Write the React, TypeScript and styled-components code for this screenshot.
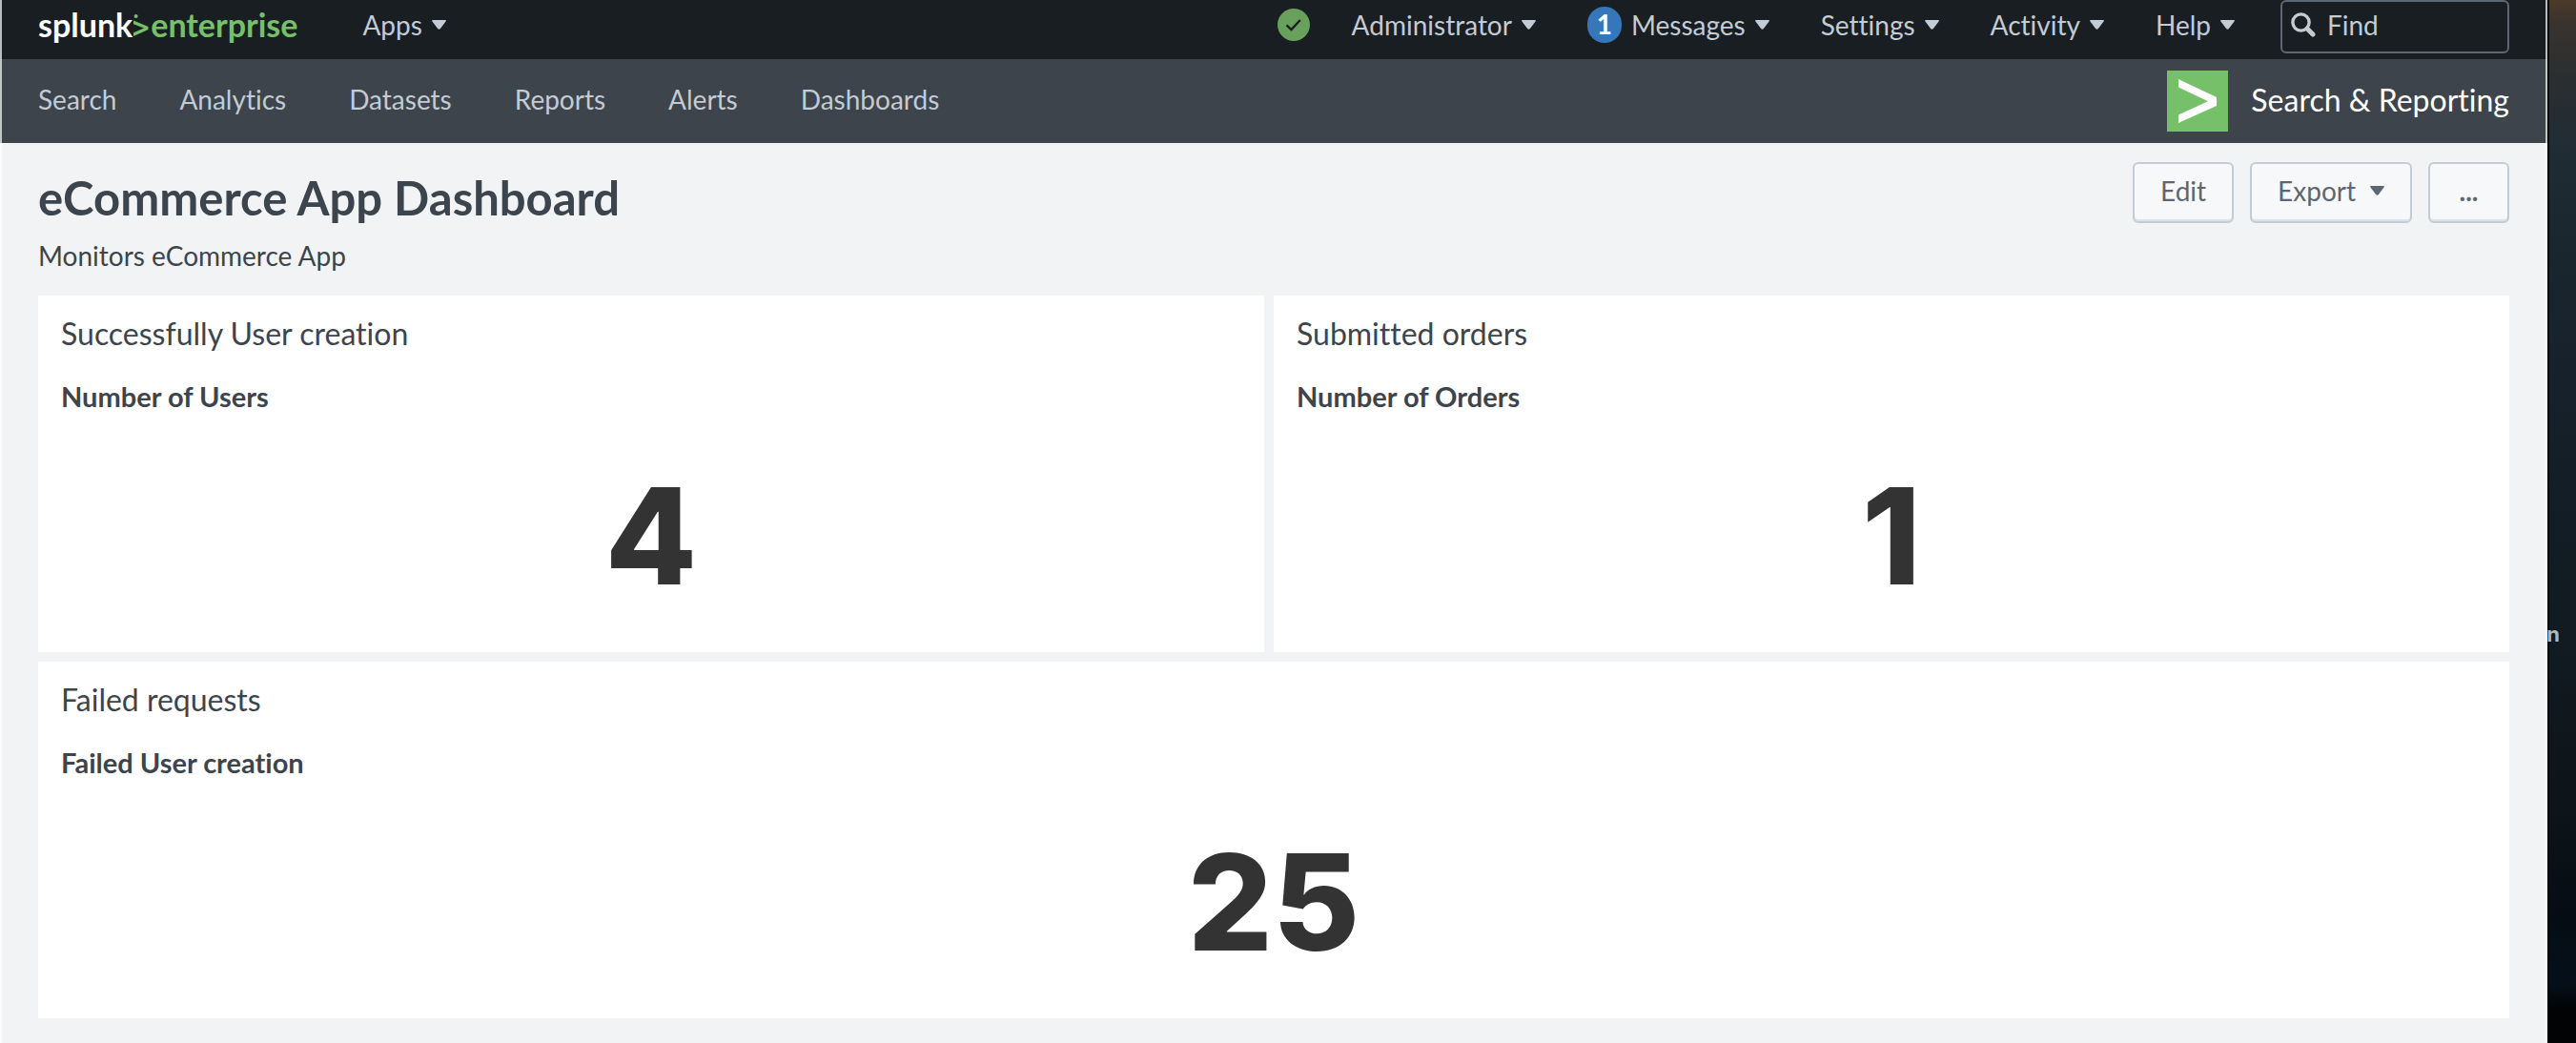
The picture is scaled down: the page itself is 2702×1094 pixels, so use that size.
import React from 'react';
import styled, { createGlobalStyle } from 'styled-components';

const color = {
  bar: '#191e22',
  nav: '#3d444c',
  page: '#f2f3f5',
  panel: '#ffffff',
  ink: '#3c444d',
  muted: '#5c6773',
  light: '#c3cbd4',
  green: '#76c069',
  blue: '#3577b9',
};

const GlobalStyle = createGlobalStyle`
  * { box-sizing: border-box; }
  body {
    margin: 0;
    font-family: Lato, "Open Sans", sans-serif;
    font-size: 28px;
    line-height: 36px;
    font-variant-ligatures: none;
    color: ${color.ink};
  }
  button, input { font: inherit; font-variant-ligatures: none; }
`;

const Screen = styled.div`
  display: flex;
  min-height: 100vh;
`;

const Window = styled.div`
  flex: 1;
  min-width: 0;
  display: flex;
  flex-direction: column;
  background: ${color.page};
`;

const Desktop = styled.aside`
  width: 30px;
  flex: none;
  display: flex;
  justify-content: flex-end;
  padding: 649px 17px 0 0;
  overflow: hidden;
  box-shadow: inset 2px 0 0 #020304;
  background: linear-gradient(
    180deg,
    #4d3a28 0,
    #38332f 24px,
    #2b2e30 80px,
    #202c34 160px,
    #1b272f 250px,
    #16212b 400px,
    #131d25 540px,
    #111a20 700px,
    #0c1319 860px,
    #050c13 960px,
    #06101a 1030px,
    #010304 1060px
  );
`;

const DesktopLabel = styled.span`
  font: 700 22px/32px Inter, sans-serif;
  color: #b4b6b8;
`;

const TopBar = styled.header`
  display: flex;
  align-items: flex-start;
  height: 62px;
  padding: 0 38px;
  background: ${color.bar};
  border: solid #b9bbbd;
  border-width: 0 2px;
`;

const Logo = styled.a`
  display: flex;
  align-items: center;
  height: 52px;
  margin-right: 68px;
  font-size: 34px;
  font-weight: 700;
  text-decoration: none;
`;

const LogoName = styled.span`
  color: #fff;
`;

const LogoProduct = styled.span`
  color: ${color.green};
`;

const LogoMark = styled.svg`
  width: 16px;
  height: 24px;
  margin: 0 2px 0 1px;
`;

const TopMenus = styled.div`
  display: flex;
  align-items: center;
  gap: 54px;
  margin-left: auto;
`;

const MenuButton = styled.button`
  display: flex;
  align-items: center;
  gap: 10px;
  height: 52px;
  padding: 0;
  border: 0;
  background: none;
  color: ${color.light};
`;

const StatusButton = styled(MenuButton)`
  margin-right: -10px;
`;

const Badge = styled.span`
  width: 36px;
  height: 38px;
  border-radius: 18px;
  line-height: 36px;
  text-align: center;
  font-weight: 700;
  background: ${color.blue};
  color: #fff;
`;

const FindBox = styled.label`
  display: flex;
  align-items: center;
  gap: 12px;
  width: 240px;
  height: 56px;
  margin-left: 48px;
  padding: 0 9px 4px;
  border: 2px solid ${color.muted};
  border-radius: 6px;
  color: ${color.light};
`;

const FindInput = styled.input`
  flex: 1;
  min-width: 0;
  padding: 0;
  border: 0;
  outline: 0;
  background: none;
  color: inherit;
  &::placeholder { color: inherit; opacity: 1; }
`;

const AppBar = styled.nav`
  display: flex;
  align-items: flex-start;
  height: 88px;
  padding: 0 38px;
  background: ${color.nav};
  border: solid #c3c5c7;
  border-width: 0 2px;
`;

const NavLinks = styled.div`
  display: flex;
  gap: 66px;
`;

const NavLink = styled.a`
  line-height: 84px;
  color: ${color.light};
  text-decoration: none;
`;

const AppLink = styled.a`
  display: flex;
  gap: 24px;
  margin-left: auto;
  font-size: 32px;
  line-height: 86px;
  color: #fff;
  text-decoration: none;
`;

const AppIcon = styled.svg`
  width: 64px;
  height: 64px;
  margin-top: 12px;
`;

const Main = styled.main`
  flex: 1;
  padding: 20px 38px 26px;
  border: solid #fcfcfc;
  border-width: 0 2px;
`;

const PageHead = styled.div`
  display: flex;
  justify-content: space-between;
  align-items: flex-start;
  margin-bottom: 24px;
`;

const Title = styled.h1`
  margin: 0;
  padding: 7px 0 13px;
  font-size: 49px;
  line-height: 60px;
  font-weight: 700;
`;

const Description = styled.p`
  margin: 0;
`;

const Actions = styled.div`
  display: flex;
  gap: 17px;
`;

const ActionButton = styled.button`
  display: flex;
  align-items: center;
  justify-content: center;
  gap: 15px;
  min-width: 85px;
  height: 64px;
  padding: 0 27px 5px;
  border: 2px solid ${color.light};
  border-radius: 6px;
  box-shadow: inset 0 -2px 0 #dfe2e5;
  background: #f7f8fa;
  color: ${color.muted};
`;

const MoreButton = styled(ActionButton)`
  font-weight: 700;
`;

const Rows = styled.div`
  display: grid;
  gap: 10px;
`;

const Row = styled.div`
  display: grid;
  grid-auto-flow: column;
  grid-auto-columns: minmax(0, 1fr);
`;

const Cell = styled.div`
  &:not(:last-child) { padding-right: 10px; }
`;

const Panel = styled.section`
  padding: 20px 24px 36px;
  background: ${color.panel};
`;

const PanelTitle = styled.h2`
  margin: 0 0 28px;
  font-size: 32px;
  line-height: 40px;
  font-weight: 400;
`;

const MetricTitle = styled.h3`
  margin: 0 0 42px;
  font-size: 29px;
  line-height: 36px;
  font-weight: 700;
`;

const MetricValue = styled.div`
  font-family: Inter, sans-serif;
  font-size: 140px;
  line-height: 172px;
  font-weight: 800;
  text-align: center;
  color: #333;
`;

const Caret = () => (
  <svg width="15" height="10" viewBox="0 0 14 10" preserveAspectRatio="none" aria-hidden="true">
    <path d="M.8 0h12.400q1.200.5.400 1.600L8.300 9q-1.300 1.300-2.600 0L.4 1.600Q-.4.500.8 0z" fill="currentColor" />
  </svg>
);

const CheckIcon = () => (
  <svg width="34" height="34" viewBox="0 0 34 34" aria-hidden="true">
    <circle cx="17" cy="17" r="17" fill="#68a05c" />
    <path d="M9.500 17.300l5 4.700 9.300-10" fill="none" stroke={color.bar} strokeWidth="2.400" />
  </svg>
);

const SearchIcon = () => (
  <svg width="26" height="26" viewBox="0 0 26 26" aria-hidden="true">
    <circle cx="10.500" cy="10.500" r="8.600" fill="none" stroke="currentColor" strokeWidth="3.400" />
    <path d="M17 17l6 6" stroke="currentColor" strokeWidth="5" strokeLinecap="round" />
  </svg>
);

const menus = [
  { label: 'Administrator' },
  { label: 'Messages', count: 1 },
  { label: 'Settings' },
  { label: 'Activity' },
  { label: 'Help' },
];

const links = ['Search', 'Analytics', 'Datasets', 'Reports', 'Alerts', 'Dashboards'];

const rows = [
  [
    { title: 'Successfully User creation', metric: 'Number of Users', value: 4 },
    { title: 'Submitted orders', metric: 'Number of Orders', value: 1 },
  ],
  [{ title: 'Failed requests', metric: 'Failed User creation', value: 25 }],
];

export default function App() {
  return (
    <Screen>
      <GlobalStyle />
      <Window>
        <TopBar>
          <Logo href="#">
            <LogoName>splunk</LogoName>
            <LogoMark viewBox="0 0 16 24" aria-hidden="true">
              <path d="M0 7.500l15.500 6.500v3L0 24v-3.800l11-4.700L0 11.200z" fill={color.green} />
              <circle cx="2.600" cy="3" r="2" fill={color.green} />
            </LogoMark>
            <LogoProduct>enterprise</LogoProduct>
          </Logo>
          <MenuButton>
            Apps <Caret />
          </MenuButton>
          <TopMenus>
            <StatusButton aria-label="Health status">
              <CheckIcon />
            </StatusButton>
            {menus.map((m) => (
              <MenuButton key={m.label}>
                {m.count && <Badge>{m.count}</Badge>}
                {m.label} <Caret />
              </MenuButton>
            ))}
          </TopMenus>
          <FindBox>
            <SearchIcon />
            <FindInput type="text" placeholder="Find" aria-label="Find" />
          </FindBox>
        </TopBar>
        <AppBar>
          <NavLinks>
            {links.map((l) => (
              <NavLink key={l} href="#">
                {l}
              </NavLink>
            ))}
          </NavLinks>
          <AppLink href="#">
            <AppIcon viewBox="0 0 64 64" aria-hidden="true">
              <rect width="64" height="64" fill={color.green} />
              <path d="M12 9l40 19v9L12 55v-8.500l31-14.300L12 17.500z" fill="#fff" />
            </AppIcon>
            Search &amp; Reporting
          </AppLink>
        </AppBar>
        <Main>
          <PageHead>
            <div>
              <Title>eCommerce App Dashboard</Title>
              <Description>Monitors eCommerce App</Description>
            </div>
            <Actions>
              <ActionButton>Edit</ActionButton>
              <ActionButton>
                Export <Caret />
              </ActionButton>
              <MoreButton>...</MoreButton>
            </Actions>
          </PageHead>
          <Rows>
            {rows.map((cells, i) => (
              <Row key={i}>
                {cells.map((c) => (
                  <Cell key={c.title}>
                    <Panel>
                      <PanelTitle>{c.title}</PanelTitle>
                      <MetricTitle>{c.metric}</MetricTitle>
                      <MetricValue>{c.value}</MetricValue>
                    </Panel>
                  </Cell>
                ))}
              </Row>
            ))}
          </Rows>
        </Main>
      </Window>
      <Desktop>
        <DesktopLabel>n</DesktopLabel>
      </Desktop>
    </Screen>
  );
}
